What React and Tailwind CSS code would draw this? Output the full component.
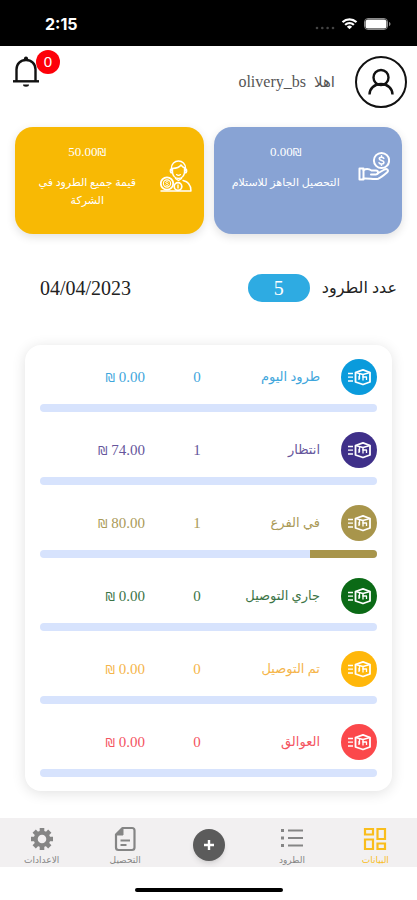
import React from 'react';

const ROWS = [
  { id: 'today', label: 'طرود اليوم', count: 0, amount: '0.00', percent: 0, text: 'text-[#3fa6dc]', fill: 'bg-[#0a9bdc]' },
  { id: 'waiting', label: 'انتظار', count: 1, amount: '74.00', percent: 0, text: 'text-[#66569c]', fill: 'bg-[#3f3089]' },
  { id: 'branch', label: 'في الفرع', count: 1, amount: '80.00', percent: 20, text: 'text-[#aa9a58]', fill: 'bg-[#a8954b]' },
  { id: 'delivering', label: 'جاري التوصيل', count: 0, amount: '0.00', percent: 0, text: 'text-[#3c7446]', fill: 'bg-[#0b6a16]' },
  { id: 'delivered', label: 'تم التوصيل', count: 0, amount: '0.00', percent: 0, text: 'text-[#f5b54a]', fill: 'bg-[#ffb70a]' },
  { id: 'stuck', label: 'العوالق', count: 0, amount: '0.00', percent: 0, text: 'text-[#f4545f]', fill: 'bg-[#fb484b]' },
];

function StatusBar() {
  return (
    <div dir="ltr" className="flex h-[46px] items-center justify-between bg-black pl-[45px] pr-[26px] pt-0.5 text-white">
      <span className="font-['Inter',sans-serif] text-base font-bold">2:15</span>
      <div className="flex items-center gap-1.5">
        <svg viewBox="0 0 20 4" className="mt-2 h-1 w-5" fill="#444">
          <circle cx="2" cy="2" r="1.3" />
          <circle cx="7.3" cy="2" r="1.3" />
          <circle cx="12.6" cy="2" r="1.3" />
          <circle cx="18" cy="2" r="1.3" />
        </svg>
        <svg viewBox="0 0 17 12" className="h-3 w-[17px]" fill="currentColor">
          <path d="M8.5 2.4c2.3 0 4.4.9 6 2.4.1.1.3.1.4 0l1.2-1.2c.1-.1.1-.3 0-.4a11 11 0 0 0-15.2 0c-.1.1-.1.3 0 .4l1.2 1.2c.1.1.3.1.4 0a8.700 8.700 0 0 1 6-2.400z" />
          <path d="M8.500 6.200c1.300 0 2.500.5 3.400 1.300.1.1.3.1.4 0l1.200-1.200c.1-.1.1-.3 0-.4a7.300 7.300 0 0 0-10 0c-.1.1-.1.3 0 .4l1.200 1.200c.1.1.3.1.4 0 .9-.8 2.100-1.300 3.400-1.300z" />
          <path d="M10.900 8.900c.1-.1.1-.3 0-.4a3.700 3.700 0 0 0-4.800 0c-.1.1-.1.300 0 .4l2.200 2.200c.1.1.3.1.4 0z" />
        </svg>
        <svg viewBox="0 0 27 12" className="h-3 w-[27px]" fill="none">
          <rect x=".5" y=".5" width="23" height="11" rx="3.500" stroke="#8a8a8a" />
          <rect x="1.500" y="1.500" width="21" height="9" rx="2.500" fill="#fff" />
          <path d="M25 4v4c.9-.3 1.500-1.100 1.500-2S25.900 4.300 25 4z" fill="#8a8a8a" />
        </svg>
      </div>
    </div>
  );
}

function Header() {
  return (
    <header className="flex items-start justify-between pl-3 pr-2.5">
      <div className="flex items-center gap-5 pt-2.5">
        <button aria-label="الحساب" className="h-[52px] w-[52px]">
          <svg viewBox="0 0 52 52" fill="none" stroke="#111" strokeWidth="2">
            <circle cx="26" cy="26" r="25" />
            <circle cx="26" cy="21.500" r="7.500" strokeWidth="2.400" />
            <path d="M14.500 38.500c0-6 5-10.500 11.500-10.500s11.500 4.500 11.500 10.500" strokeWidth="2.400" />
          </svg>
        </button>
        <p className="flex items-center gap-2 text-base text-[#555]">
          <span className="text-[15px]">اهلا</span>
          <span dir="ltr">olivery_bs</span>
        </p>
      </div>
      <button aria-label="الإشعارات" className="relative mt-2.5 h-8 w-7">
        <svg viewBox="0 0 28 32" fill="none" stroke="#111" strokeWidth="2.400">
          <path d="M4.500 25V13.500C4.500 8 8.500 4 14 4s9.500 4 9.500 9.500V25" />
          <path d="M1 25.300h26" />
          <path d="M11.800 3.500a2.200 3 0 0 1 4.400 0z" fill="#111" stroke="none" />
          <path d="M11 28.500h6a3 2.200 0 0 1-6 0z" fill="#111" stroke="none" />
        </svg>
        <span className="absolute -top-1.5 left-6 flex h-6 w-6 items-center justify-center rounded-full bg-[#fd0009] font-['Liberation_Sans',sans-serif] text-[15px] text-white">0</span>
      </button>
    </header>
  );
}

function HandCoinIcon() {
  return (
    <svg viewBox="0 0 32 32" className="h-8 w-8 shrink-0" fill="none" stroke="#fff" strokeWidth="2" strokeLinecap="round" strokeLinejoin="round">
      <circle cx="23.500" cy="9.500" r="7.600" />
      <path d="M25.800 7.300c-.5-.8-1.300-1.100-2.300-1.100-1.300 0-2.200.6-2.200 1.600 0 2.300 4.600 1.100 4.600 3.500 0 1-.9 1.700-2.300 1.700-1.100 0-2-.4-2.500-1.200M23.500 4.900v1.200M23.500 13v1.300" strokeWidth="1.600" />
      <path d="M1.500 17.500h4v11h-4z" />
      <path d="M5.500 19c3-1.500 5.500-1.200 8 .5h4.500c2.500 0 2.800 3.700 0 3.900h-5" />
      <path d="M19.500 22.500l7-4c2.500-1.300 4.700 1 2.700 2.700-3 2.600-6 5.300-9 6.500-4 1.300-9-.7-14.700-.2" />
    </svg>
  );
}

function MerchantIcon() {
  return (
    <svg viewBox="0 0 32 32" className="h-8 w-8 shrink-0" fill="none" stroke="#fff" strokeWidth="1.400" strokeLinecap="round" strokeLinejoin="round">
      <path d="M11.500 11V8c0-4 3-7 7-7s7 3 7 7v3" />
      <path d="M12.500 8.500c4-.2 7-1.200 8.500-3.500 1 1.500 2.500 2.500 4 3" />
      <path d="M12.500 8.500V12c0 3.600 2.600 6.500 6 6.500s6-2.900 6-6.500V8M11.500 9c-1.800.2-1.800 4 .8 4M25.500 9c1.800.2 1.800 4-.8 4" />
      <path d="M16.500 14.500c1.200 1 2.800 1 4 0" strokeWidth="1.100" />
      <path d="M15.500 18.500l3 2 3-2M23 20.500c5 1 8 4 8 10.500M1 31h30" />
      <circle cx="7" cy="23.500" r="6.200" strokeWidth="1.800" />
      <circle cx="7" cy="23.500" r="3.600" strokeWidth="1.100" />
      <path d="M8.300 22c-1-.9-2.600-.4-2.600.5 0 1.200 2.700.8 2.700 2.100 0 1-1.700 1.400-2.800.4" strokeWidth="1" />
      <circle cx="18" cy="26.500" r="3.800" strokeWidth="1.700" />
      <path d="M18 25v3" />
    </svg>
  );
}

function SummaryCard({ className, amount, label, icon }) {
  return (
    <section className={`min-h-[107px] flex-1 rounded-[18px] pr-3 pt-4 text-[13px] leading-[18px] text-white shadow-[0_3px_10px_rgba(0,0,0,0.12)] ${className}`}>
      <div className="flex items-center">
        {icon}
        <div className="flex-1 px-4 text-center">
          <p dir="ltr" className="mb-[11px]">
            {amount}<span className="font-['DejaVu_Sans',sans-serif] text-[11px]">₪</span>
          </p>
          <h2 className="text-[11px] leading-[18px]">{label}</h2>
        </div>
      </div>
    </section>
  );
}

function ParcelIcon() {
  return (
    <svg viewBox="0 0 26 18" className="h-[18px] w-[26px]" fill="none" stroke="#fff" strokeWidth="1.800" strokeLinejoin="round">
      <path d="M2 5.500h5M2 9.200h5M2 13h5" strokeWidth="1.300" />
      <path d="M9.500 4.500L17 1.800l7 2.700v9.500l-7 2.500-7.500-2.500z" />
      <path d="M9.500 4.500l7.500 2 7-2M17 6.500v3" strokeWidth="1.500" />
      <path d="M13.500 5.500v5.500M13 8v4M17 12.500V9h3.500v3" strokeWidth="1.300" />
    </svg>
  );
}

function StatusRow({ row }) {
  return (
    <li>
      <div className={`flex h-9 items-center text-[15px] ${row.text}`}>
        <span className={`flex h-9 w-9 shrink-0 items-center justify-center rounded-full ${row.fill}`}>
          <ParcelIcon />
        </span>
        <span className="flex-1 whitespace-nowrap pr-[21px] text-[13px]">{row.label}</span>
        <span className="w-10 text-center">{row.count}</span>
        <span dir="ltr" className="mr-8 w-[105px] text-right">
          <span className="font-['DejaVu_Sans',sans-serif] text-xs">₪</span> {row.amount}
        </span>
      </div>
      <div className="mt-[9px] h-2 overflow-hidden rounded-full bg-[#d7e3fd]">
        <div className={`h-full ${row.fill}`} style={{ width: `${row.percent}%` }} />
      </div>
    </li>
  );
}

function NavItem({ label, active, children }) {
  return (
    <a href="#" className={`flex flex-col items-center gap-0.5 pt-2 text-[9px] leading-3 ${active ? 'text-[#f9bd1c]' : 'text-[#858585]'}`}>
      <svg viewBox="0 0 26 26" className="h-[26px] w-[26px]" fill="none" stroke="currentColor" strokeWidth="2.200">
        {children}
      </svg>
      {label}
    </a>
  );
}

function BottomNav() {
  return (
    <nav className="grid h-[49px] grid-cols-5 bg-[#f2f0f1]">
      <NavItem label="البيانات" active>
        <path d="M3 3h8v5.500H3zM15.500 3H23v10h-7.500zM3 13.500h8V23H3zM15.500 17.500H23V23h-7.500z" />
      </NavItem>
      <NavItem label="الطرود">
        <path d="M2 4.500h3M2 12h3M2 19.500h3" strokeWidth="2.800" />
        <path d="M9 4.500h15M9 12h15M9 19.500h15" strokeWidth="2" />
      </NavItem>
      <div className="flex items-center justify-center pt-1">
        <button aria-label="إضافة" className="flex h-8 w-8 items-center justify-center rounded-full bg-[#5b5b5b] shadow-md">
          <svg viewBox="0 0 12 12" className="h-3 w-3" stroke="#fff" strokeWidth="2.400">
            <path d="M6 1v10M1 6h10" />
          </svg>
        </button>
      </div>
      <NavItem label="التحصيل">
        <path d="M10.500 2H20a2.500 2.500 0 0 1 2.500 2.500v17A2.500 2.500 0 0 1 20 24H6.500A2.500 2.500 0 0 1 4 21.500V8.500z" strokeLinejoin="round" />
        <path d="M11 2v7H4z" fill="currentColor" strokeWidth="1" />
        <path d="M8.500 14.500h9.500M8.500 19h6" />
      </NavItem>
      <NavItem label="الاعدادات">
        <circle cx="13" cy="13" r="6.300" strokeWidth="4" />
        <path d="M13 2v4M13 20v4M2 13h4M20 13h4M5.200 5.200l2.900 2.900M17.900 17.900l2.900 2.900M20.800 5.200l-2.900 2.900M8.100 17.900l-2.900 2.900" strokeWidth="4.600" />
      </NavItem>
    </nav>
  );
}

export default function App() {
  return (
    <div dir="rtl" className="flex min-h-screen flex-col bg-white font-['Liberation_Serif','DejaVu_Sans',serif]">
      <StatusBar />
      <Header />

      <main className="flex-1 pb-[27px]">
        <div className="mt-[19px] flex gap-2.5 px-[15px]">
          <SummaryCard className="bg-[#88a3d4]" amount="0.00" label="التحصيل الجاهز للاستلام" icon={<HandCoinIcon />} />
          <SummaryCard className="bg-[#f8b904]" amount="50.00" label="قيمة جميع الطرود في الشركة" icon={<MerchantIcon />} />
        </div>

        <div className="mt-10 flex h-7 items-center pl-10 pr-5 text-xl text-[#222]">
          <h1 className="text-base">عدد الطرود</h1>
          <span className="mr-3 flex h-7 w-[62px] items-center justify-center rounded-full bg-[#2eabe2] text-white">5</span>
          <time dateTime="2023-04-04" dir="ltr" className="mr-auto">04/04/2023</time>
        </div>

        <ul className="mx-[25px] mt-[43px] space-y-5 rounded-2xl bg-white px-[15px] pb-3.5 pt-3.5 shadow-[0_2px_14px_rgba(0,0,0,0.12)]">
          {ROWS.map(row => <StatusRow key={row.id} row={row} />)}
        </ul>
      </main>

      <BottomNav />
      <footer className="flex h-[33px] items-end justify-center pb-2">
        <div className="h-1 w-[148px] rounded-full bg-black" />
      </footer>
    </div>
  );
}
